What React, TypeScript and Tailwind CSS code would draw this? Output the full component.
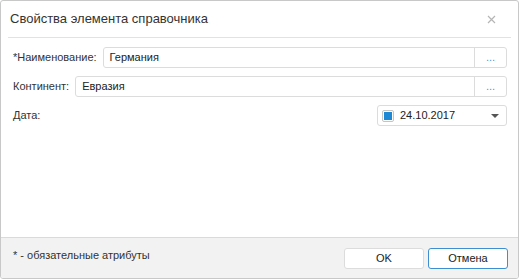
import { useState } from "react";

const font = "font-['Liberation_Sans',Arial,sans-serif]";

interface FieldProps {
    label: string;
    value: string;
}

const LookupField = ({ label, value }: FieldProps) => {
    return (
        <div className="flex items-center h-[21px]">
            <span className="text-[11px] text-[#333] pr-[6px] whitespace-nowrap">{label}</span>
            <div className="flex flex-1 h-full border border-[#dcdcdc] rounded-[3px] bg-white">
                <div className="flex-1 flex items-center px-[6px] text-[11px] text-[#222]">{value}</div>
                <button className="w-[32px] border-l border-[#dcdcdc] flex items-end justify-center pb-[4px] text-[11px] leading-none text-[#4a9ad8]">
                    ...
                </button>
            </div>
        </div>
    );
};

const DateField = () => {
    const [checked] = useState(true);
    return (
        <div className="flex items-center h-[21px]">
            <span className="text-[11px] text-[#333]">Дата:</span>
            <div className="ml-auto w-[130px] h-full border border-[#dcdcdc] rounded-[3px] flex items-center pl-[4px] pr-[7px]">
                <span className="w-[12px] h-[12px] border border-[#c4c4c4] rounded-[2px] flex items-center justify-center">
                    {checked && <span className="w-[8px] h-[8px] bg-[#1e88d4]" />}
                </span>
                <span className="ml-[6px] text-[11px] text-[#222]">24.10.2017</span>
                <svg className="ml-auto" width="8" height="4" viewBox="0 0 8 4">
                    <path d="M0 0h8L4 4z" fill="#555" />
                </svg>
            </div>
        </div>
    );
};

const App = () => {
    return (
        <div className={`${font} w-[519px] h-[279px] border border-[#c8c8c8] rounded-[3px] flex flex-col overflow-hidden bg-white`}>
            <div className="h-[36px] flex items-center justify-between pl-[9px] pr-[22px]">
                <span className="text-[13px] text-[#333]">Свойства элемента справочника</span>
                <svg width="9" height="9" viewBox="0 0 9 9">
                    <path d="M1 1l7 7M8 1l-7 7" stroke="#b5b5b5" strokeWidth="1.2" />
                </svg>
            </div>
            <div className="mx-[7px] h-px bg-[#e2e2e2]" />
            <div className="flex-1 flex flex-col gap-[8px] pt-[9px] pl-[12px] pr-[11px]">
                <LookupField label="*Наименование:" value="Германия" />
                <LookupField label="Континент:" value="Евразия" />
                <DateField />
            </div>
            <div className="h-[41px] border-t border-[#dadada] bg-[#f2f2f2] flex items-center pl-[12px] pr-[10px]">
                <span className="text-[11px] text-[#333] -mt-[6px]">* - обязательные атрибуты</span>
                <div className="ml-auto flex gap-[4px]">
                    <button className="w-[80px] h-[21px] bg-white border border-[#dcdcdc] rounded-[3px] text-[11px] text-[#222]">OK</button>
                    <button className="w-[80px] h-[21px] bg-white border border-[#3d8fd0] rounded-[3px] text-[11px] text-[#222]">Отмена</button>
                </div>
            </div>
        </div>
    );
};

export default App;
